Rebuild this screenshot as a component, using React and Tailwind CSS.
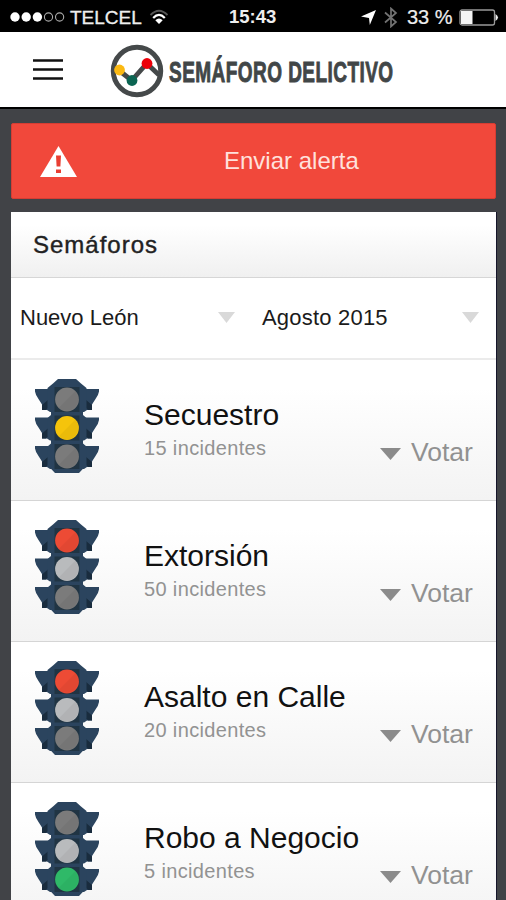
import React from "react";

const LAMPS = {
  off: "#7b7b7b",
  pale: "#b9bbbd",
  yellow: "#f5c40b",
  red: "#ed4b35",
  green: "#2fb968",
};

const incidents = [
  { name: "Secuestro", count: 15, lamps: ["off", "yellow", "off"] },
  { name: "Extorsión", count: 50, lamps: ["red", "pale", "off"] },
  { name: "Asalto en Calle", count: 20, lamps: ["red", "pale", "off"] },
  { name: "Robo a Negocio", count: 5, lamps: ["off", "pale", "green"] },
];

function TrafficLight({ lamps }) {
  return (
    <svg className="block h-[94px] w-[66px] shrink-0" viewBox="0 0 66 94">
      {[10, 38.5, 67].map((y) => (
        <g key={y} transform={`translate(0 ${y})`}>
          <path d="M1 0h64v2.500q-.5 3.500-3.500 7.500L58 15.500v5.500h-5L50 23H16l-3-2H8v-5.500L4.500 10Q1.500 6 1 2.500z" fill="#2b445e" />
          <path d="M8 16l6.500-5.500V18L12 21H8zM58 16l-6.500-5.500V18l2.500 3h4z" fill="#192c3e" />
        </g>
      ))}
      <path
        d="M24 0h18l5 4.500L52.500 9v20L49 33v3l3.500 3v18L49 61v3.500l3.500 3V86L45 94H21l-7.500-8V67.500l3.500-3V61l-3.500-4V39l3.500-3v-3l-3.500-4V9L19 4.500z"
        fill="#2b445e"
      />
      {lamps.map((lamp, i) => {
        const cy = 20.5 + i * 28.5;
        return (
          <g key={i}>
            <rect x="20.500" y={cy - 12.5} width="25" height="25" fill="#203443" />
            <circle cx="33" cy={cy} r="11.9" fill={LAMPS[lamp]} />
            <path
              d={`M41.400 ${cy - 8.4}A11.900 11.900 0 0 1 24.600 ${cy + 8.4}z`}
              fill="#000"
              opacity=".045"
            />
          </g>
        );
      })}
    </svg>
  );
}

function StatusBar() {
  return (
    <div className="flex h-8 shrink-0 items-center bg-black pt-[2px] text-[#eee]">
      <svg className="ml-[10px] h-[12px] w-[55px] shrink-0" viewBox="0 0 55 12">
        {[5, 16.2, 27.4].map((x) => (
          <circle key={x} cx={x} cy="6" r="4.700" fill="#fff" />
        ))}
        {[38.5, 49.6].map((x) => (
          <circle key={x} cx={x} cy="6" r="4.100" fill="none" stroke="#aaa" strokeWidth="1.100" />
        ))}
      </svg>
      <span className="ml-[5px] w-[72px] text-[19px] leading-none [-webkit-text-stroke:0.3px_#eee]">TELCEL</span>
      <svg className="ml-[7px] h-[16px] w-[20px] shrink-0" viewBox="0 0 20 16" fill="none">
        <path d="M1.500 6Q10-2.500 18.500 6" stroke="#555" strokeWidth="1.800" />
        <path d="M4.200 9Q10 2.800 15.800 9" stroke="#fff" strokeWidth="2.200" />
        <path d="M6.300 11.300Q10 7.500 13.700 11.300L10 15z" fill="#fff" />
      </svg>
      <span className="ml-[60px] w-[48px] text-[18.500px] font-bold leading-none">15:43</span>
      <svg className="ml-[84px] h-[15px] w-[15px] shrink-0" viewBox="0 0 15 15">
        <path d="M15 0L8.800 15 8 8 0 6.500z" fill="#fff" />
      </svg>
      <svg className="ml-[8px] h-[21px] w-[14px] shrink-0" viewBox="0 0 14 21" fill="none" stroke="#737373" strokeWidth="1.700">
        <path d="M1 5.500l11 9.500-5 4.500v-18L12 6 1 15.500" />
      </svg>
      <span className="ml-[9px] w-[48px] whitespace-nowrap text-[20px] leading-none [-webkit-text-stroke:0.2px_#eee]">33 %</span>
      <svg className="ml-[4px] h-[17px] w-[40px] shrink-0" viewBox="0 0 40 17">
        <rect x="1" y="1" width="34.500" height="15" rx="2" fill="none" stroke="#999" strokeWidth="1.300" />
        <path d="M2 2h11.500v13H2z" fill="#f4f4f4" />
        <path d="M36.500 5q5 3.500 0 7z" fill="#eee" />
      </svg>
    </div>
  );
}

function Header() {
  return (
    <header className="flex h-[77px] shrink-0 items-center border-b-2 border-black bg-white">
      <svg className="ml-[33px] h-[22px] w-[30px] shrink-0" viewBox="0 0 30 22">
        <path d="M0 1.500h30M0 10.500h30M0 19.500h30" stroke="#111" strokeWidth="2.700" />
      </svg>
      <svg className="ml-[47px] mt-[3px] h-[54px] w-[54px] shrink-0" viewBox="0 0 54 54">
        <circle cx="27" cy="27" r="23.700" fill="#fff" stroke="#45494a" strokeWidth="5" />
        <path d="M8.500 26L21.700 36.500 36.800 19.500 49 31" fill="none" stroke="#45494a" strokeWidth="4.800" />
        <circle cx="9.500" cy="26" r="5.400" fill="#fbb912" />
        <circle cx="22" cy="36.500" r="5.400" fill="#0b6552" />
        <circle cx="37" cy="19.500" r="5.400" fill="#ec0009" />
      </svg>
      <div className="ml-[5px] mt-[6px] w-[226px]">
        <span className="block w-max origin-left scale-x-[0.655] whitespace-nowrap text-[29px] font-bold leading-none tracking-[0.700px] text-[#414647] [-webkit-text-stroke:0.9px_#414647]">
          SEMÁFORO DELICTIVO
        </span>
      </div>
    </header>
  );
}

function Caret({ className }) {
  return (
    <svg className={className} viewBox="0 0 20 12" preserveAspectRatio="none" fill="currentColor">
      <path d="M0 0h20L10 12z" />
    </svg>
  );
}

function IncidentRow({ name, count, lamps }) {
  return (
    <li className="flex h-[141px] shrink-0 border-b border-[#d5d5d5] bg-gradient-to-b from-white from-20% to-[#f3f3f3] pl-[23px] pt-[19px]">
      <TrafficLight lamps={lamps} />
      <div className="ml-[44px] w-[236px] pt-[20px]">
        <h2 className="whitespace-nowrap text-[30px] leading-8 text-[#111]">{name}</h2>
        <p className="mt-[5px] text-[20px] leading-6 tracking-[0.350px] text-[#929292]">{count} incidentes</p>
      </div>
      <button className="mt-[57px] flex h-8 items-center self-start whitespace-nowrap text-[26.500px] leading-8 text-[#919191]">
        <Caret className="mr-[10px] mt-[3px] h-[12px] w-[21px] text-[#8b8b8b]" />
        Votar
      </button>
    </li>
  );
}

export default function App() {
  return (
    <div className="flex h-[900px] w-[506px] flex-col overflow-hidden bg-[#414347] font-['Liberation_Sans',Arial,sans-serif]">
      <StatusBar />
      <Header />
      <main className="flex shrink-0 flex-col pl-[11px] pr-[10px] pt-[14px]">
        <button className="flex h-[76px] items-center rounded-[2px] border border-[#d63d33] bg-[#f1483b] text-left">
          <svg className="ml-[28px] h-[31px] w-[37px] shrink-0" viewBox="0 0 37 31">
            <path d="M18.500 0L37 31H0z" fill="#fff" />
            <path d="M16 9.500h5l-.6 11h-3.800zM16 23.500h5v3.500h-5z" fill="#e93e32" />
          </svg>
          <span className="ml-[147px] text-[24px] leading-8 text-[#ffe1dc]">Enviar alerta</span>
        </button>
        <section className="mt-[13px] flex flex-col bg-white shadow-[1px_0_0_#15152a]">
          <h1 className="h-[66px] border-b border-[#d6d6d6] bg-gradient-to-b from-white from-20% to-[#f0f0f0] pl-[22px] pt-[17px] text-[24px] leading-8 tracking-[1px] text-[#222] [-webkit-text-stroke:0.4px_#222]">
            Semáforos
          </h1>
          <div className="flex h-[82px] items-center border-b-2 border-[#ebebeb] pb-px text-[22px] text-[#1b1b1b]">
            <div className="ml-[9px] flex w-[215px] items-center justify-between">
              <span>Nuevo León</span>
              <Caret className="h-[11px] w-[17px] text-[#d9d9d9]" />
            </div>
            <div className="ml-[27px] flex w-[217px] items-center justify-between">
              <span className="tracking-[0.200px]">Agosto 2015</span>
              <Caret className="h-[11px] w-[17px] text-[#d9d9d9]" />
            </div>
          </div>
          <ul className="flex flex-col">
            {incidents.map((incident) => (
              <IncidentRow key={incident.name} {...incident} />
            ))}
          </ul>
        </section>
      </main>
    </div>
  );
}
